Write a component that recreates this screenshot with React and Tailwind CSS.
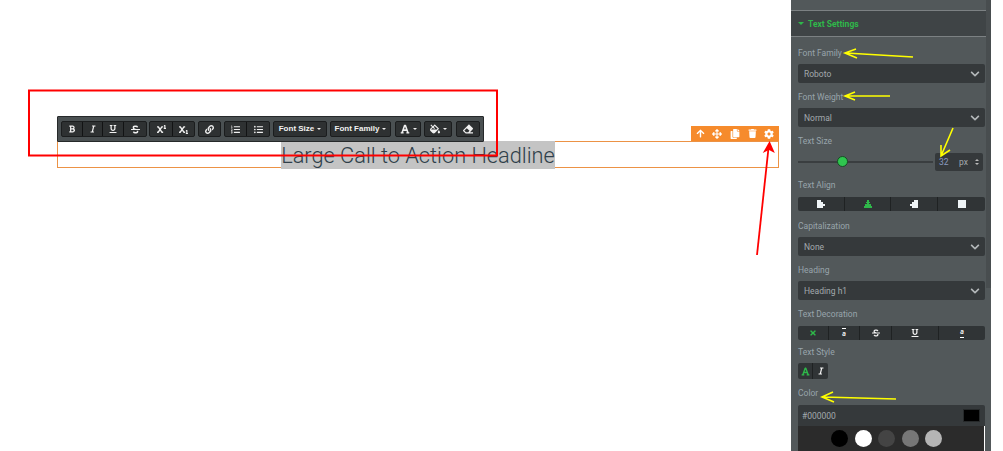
import React from "react";
import { FaBold, FaItalic, FaUnderline, FaStrikethrough, FaSuperscript, FaSubscript, FaLink, FaListOl, FaListUl, FaFont, FaFillDrip, FaEraser, FaArrowUp, FaArrowsAlt, FaCopy, FaTrash, FaCog, FaChevronDown, FaTimes } from "react-icons/fa";

const Tb = ({ children, className = "" }) => (
  <div className={"flex h-[14px] items-center justify-center whitespace-nowrap border-r border-black/60 text-[#f1f1f1] last:border-r-0 " + className}>{children}</div>
);
const Group = ({ children, className = "" }) => (
  <div className={"flex rounded-[2px] border border-[#1b1d1e] bg-[#2e3132] " + className}>{children}</div>
);
const Caret = () => <span className="ml-[3px] inline-block border-x-[2px] border-t-[2px] border-x-transparent border-t-[#eee]" />;

const Toolbar = () => (
  <div className="absolute left-[57px] top-[116px] flex h-[26px] w-[427px] items-center gap-[3px] rounded-[1px] border border-[#26292a] bg-[#4a5052] pl-[3px] text-[8px] font-bold" style={{ fontFamily: '"Liberation Sans", sans-serif' }}>
    <Group>
      <Tb className="w-[21px]"><FaBold size={8} /></Tb>
      <Tb className="w-[20px]"><FaItalic size={8} /></Tb>
      <Tb className="w-[21px]"><FaUnderline size={8} /></Tb>
      <Tb className="w-[22px]"><FaStrikethrough size={9} /></Tb>
    </Group>
    <Group className="-ml-px">
      <Tb className="w-[23px]"><FaSuperscript size={9} /></Tb>
      <Tb className="w-[21px]"><FaSubscript size={9} /></Tb>
    </Group>
    <Group><Tb className="w-[21px]"><FaLink size={9} /></Tb></Group>
    <Group>
      <Tb className="w-[22px]"><FaListOl size={9} /></Tb>
      <Tb className="w-[22px]"><FaListUl size={9} /></Tb>
    </Group>
    <Group><Tb className="w-[52px]">Font Size<Caret /></Tb></Group>
    <Group><Tb className="w-[59px]">Font Family<Caret /></Tb></Group>
    <Group className="ml-px"><Tb className="w-[24px]"><FaFont size={10} /><Caret /></Tb></Group>
    <Group><Tb className="w-[26px]"><FaFillDrip size={10} /><Caret /></Tb></Group>
    <Group className="ml-px"><Tb className="w-[22px]"><FaEraser size={10} /></Tb></Group>
  </div>
);

const Actions = () => (
  <div className="absolute left-[691px] top-[126px] flex h-[15px] w-[88px] items-center justify-around bg-[#f68b2c] px-[1px] text-white">
    <FaArrowUp size={9} />
    <FaArrowsAlt size={10} />
    <FaCopy size={10} />
    <FaTrash size={9} />
    <FaCog size={10} />
  </div>
);

const Label = ({ children, className = "" }) => (
  <div className={"h-[10px] text-[8.5px] leading-[11px] text-[#98a4ab] " + className}>{children}</div>
);
const Select = ({ value, className = "" }) => (
  <div className={"flex h-[19px] w-[187px] items-center justify-between rounded-[2px] bg-[#35393b] pl-[6px] pr-[5px] text-[8.5px] text-[#a3a9ad] " + className}>
    <span className="pt-[2px]">{value}</span>
    <FaChevronDown size={10} className="text-[#b4b8ba]" />
  </div>
);
const Seg = ({ children, w, className = "" }) => (
  <div style={{ width: w }} className={"flex h-full items-center justify-center border-r border-[#1f2223] last:border-r-0 " + className}>{children}</div>
);

const AlignIcon = ({ kind, color = "#eef3f6" }) => {
  const paths = {
    left: "M0 0h4v2h2v2h2v2H6v2H0z",
    center: "M3 0h2v2h1v1h-1v1h2v2h1v2H0V6h1V4h2V3H2V2h1z",
    right: "M4 0h4v8H2V6H0V4h2V2h2z",
    justify: "M0 0h8v8H0z",
  };
  return (
    <svg width="8" height="8" viewBox="0 0 8 8"><path d={paths[kind]} fill={color} /></svg>
  );
};

const Sidebar = () => (
  <div className="relative h-[451px] w-[200px] shrink-0 overflow-hidden bg-[#52585a]" style={{ fontFamily: 'Roboto, sans-serif' }}>
    <div className="h-[10px]" />
    <div className="flex h-[27px] items-center gap-[4px] border-y border-[#7c8183] bg-[#3f4446] pl-[7px] text-[8.5px] font-bold text-[#2fb84a]">
      <span className="border-x-[3px] border-t-[3px] border-x-transparent border-t-[#2fb84a]" />
      <span className="pt-[1px]">Text Settings</span>
    </div>
    <div className="flex flex-col pl-[7px] pt-[11px]">
      <Label>Font Family</Label>
      <Select value="Roboto" className="mt-[6px]" />
      <Label className="mt-[9px]">Font Weight</Label>
      <Select value="Normal" className="mt-[6px]" />
      <Label className="mt-[9px]">Text Size</Label>
      <div className="mt-[7px] flex h-[18px] items-center">
        <div className="relative h-[2px] w-[135px] bg-[#3a3e40]">
          <div className="absolute left-[39px] top-[-5px] h-[11px] w-[11px] rounded-full border border-[#174d25] bg-[#2fc64f]" />
        </div>
        <div className="ml-[2px] flex h-[18px] w-[48px] items-center rounded-[2px] bg-[#35393b] pl-[4px] text-[8.5px] text-[#8b99c0]">
          <span className="w-[20px]">32</span>
          <span className="text-[#a3a9ad]">px</span>
          <span className="ml-[7px] flex flex-col gap-[2px]">
            <span className="border-x-[2px] border-b-[2px] border-x-transparent border-b-[#bbb]" />
            <span className="border-x-[2px] border-t-[2px] border-x-transparent border-t-[#bbb]" />
          </span>
        </div>
      </div>
      <Label className="mt-[9px]">Text Align</Label>
      <div className="mt-[7px] flex h-[14px] w-[187px] rounded-[2px] bg-[#303436]">
        <Seg w={47}><AlignIcon kind="left" /></Seg>
        <Seg w={46}><AlignIcon kind="center" color="#2fb84a" /></Seg>
        <Seg w={47}><AlignIcon kind="right" /></Seg>
        <Seg w={47}><AlignIcon kind="justify" /></Seg>
      </div>
      <Label className="mt-[10px]">Capitalization</Label>
      <Select value="None" className="mt-[6px]" />
      <Label className="mt-[9px]">Heading</Label>
      <Select value="Heading h1" className="mt-[6px]" />
      <Label className="mt-[9px]">Text Decoration</Label>
      <div className="mt-[7px] flex h-[14px] w-[187px] rounded-[2px] bg-[#303436] text-[#f1f1f1]">
        <Seg w={31}><FaTimes size={8} className="text-[#2fb84a]" /></Seg>
        <Seg w={31}><span className="border-t border-white pt-[2px] text-[7px] font-bold italic leading-[7px]">a</span></Seg>
        <Seg w={32}><FaStrikethrough size={8} /></Seg>
        <Seg w={47}><FaUnderline size={8} /></Seg>
        <Seg w={46}><span className="border-b border-white pb-[1px] text-[7px] font-bold italic leading-[7px]">a</span></Seg>
      </div>
      <Label className="mt-[7px]">Text Style</Label>
      <div className="mt-[6px] flex h-[16px] w-[30px] rounded-[2px] bg-[#303436]">
        <Seg w={15}><FaFont size={9} className="text-[#2fb84a]" /></Seg>
        <Seg w={15}><FaItalic size={8} className="text-[#f1f1f1]" /></Seg>
      </div>
      <Label className="mt-[9px]">Color</Label>
      <div className="mt-[7px] flex h-[21px] w-[187px] items-center justify-between rounded-t-[2px] bg-[#35393b] pl-[4px] pr-[5px] text-[8.5px] text-[#a3a9ad]">
        <span className="pt-[2px]">#000000</span>
        <span className="h-[13px] w-[17px] border border-[#26292a] bg-black" />
      </div>
      <div className="flex h-[25px] w-[187px] items-center gap-[6.5px] border-r border-white bg-[#2b2b2b] pl-[33px]">
        <span className="h-[17px] w-[17px] rounded-full bg-black" />
        <span className="h-[17px] w-[17px] rounded-full bg-white" />
        <span className="h-[17px] w-[17px] rounded-full bg-[#444]" />
        <span className="h-[17px] w-[17px] rounded-full bg-[#777]" />
        <span className="h-[17px] w-[17px] rounded-full bg-[#b5b5b5]" />
      </div>
    </div>
    <div className="absolute right-0 top-0 h-[288px] w-[5px] bg-[#484d4f]" />
  </div>
);

const Annotations = () => (
  <svg className="pointer-events-none absolute left-0 top-0" width="1003" height="451" fill="none">
    <rect x="29" y="90.5" width="468" height="65" stroke="#ff0000" strokeWidth="2" />
    <g stroke="#ff0000" strokeWidth="1.8">
      <path d="M757 255L768.5 148" />
      <path d="M765 151L769.5 143L773 151L769 149Z" fill="#ff0000" />
    </g>
    <g stroke="#ffff00" strokeWidth="1.6">
      <path d="M913 57L846 53M856 49L845 53L857 58" />
      <path d="M890 96L846 96M855 92L845 96L855 100" />
      <path d="M953 128L941 156M941 145L941 156L950 150" />
      <path d="M896 399L823 397M833 392L822 397L834 402" />
    </g>
  </svg>
);

export default function App() {
  return (
    <div className="relative flex h-[451px] w-[1003px] overflow-hidden bg-white" style={{ fontFamily: '"Open Sans", "Liberation Sans", sans-serif' }}>
      <div className="relative w-[791px] shrink-0">
        <div className="ml-[57px] mt-[141px] flex h-[27px] w-[722px] items-center justify-center border border-[#ec9245]">
          <span className="inline-block h-[28px] bg-[#c4c4c4] text-[21.75px] font-light leading-[30px] text-[#2f3f4a]" style={{ fontFamily: 'Roboto, sans-serif' }}>Large Call to Action Headline</span>
        </div>
        <Toolbar />
        <Actions />
      </div>
      <Sidebar />
      <Annotations />
    </div>
  );
}
